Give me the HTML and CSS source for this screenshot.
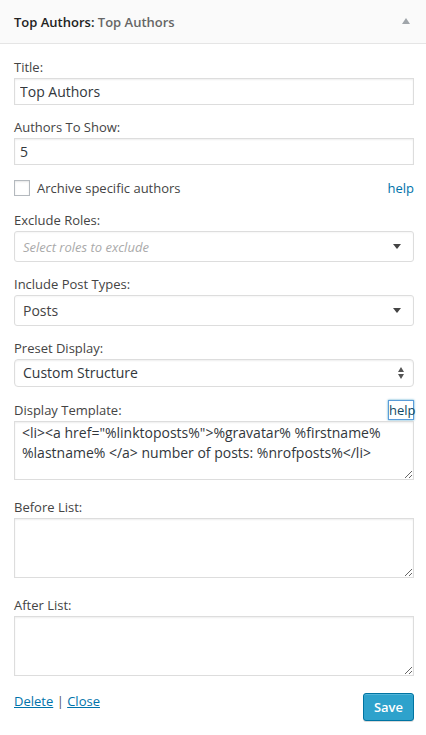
FILE: index.html
```html
<!DOCTYPE html>
<html lang="en">
<head>
<meta charset="utf-8">
<title>Top Authors widget</title>
<link rel="stylesheet" href="styles.css">
</head>
<body>
<div class="widget">
  <div class="widget-top">
    <h4 class="widget-title">Top Authors:<span class="in-title"> Top Authors</span></h4>
    <span class="toggle"><svg width="8" height="6" viewBox="0 0 8 6"><path d="M0 6 L4 0 L8 6 Z" fill="#a0a5aa"/></svg></span>
  </div>
  <div class="widget-inside">
    <div class="field f-title">
      <label class="lbl">Title:</label>
      <input class="text" type="text" value="Top Authors">
    </div>
    <div class="field f-count">
      <label class="lbl">Authors To Show:</label>
      <input class="text" type="text" value="5">
    </div>
    <div class="check-row">
      <label class="check-label"><span class="checkbox"></span>Archive specific authors</label>
      <a class="help-link" href="#">help</a>
    </div>
    <div class="field f-roles">
      <label class="lbl">Exclude Roles:</label>
      <div class="select2"><span class="placeholder">Select roles to exclude</span><span class="s2-arrow"></span></div>
    </div>
    <div class="field f-types">
      <label class="lbl">Include Post Types:</label>
      <div class="select2"><span class="s2-value">Posts</span><span class="s2-arrow"></span></div>
    </div>
    <div class="field f-preset">
      <label class="lbl">Preset Display:</label>
      <div class="native-select"><span class="ns-value">Custom Structure</span>
        <svg class="ns-arrows" width="6" height="12" viewBox="0 0 6 12"><path d="M0 5 L3 0 L6 5 Z M0 7 L6 7 L3 12 Z" fill="#555"/></svg>
      </div>
    </div>
    <div class="field f-template">
      <div class="lbl-row">
        <label class="lbl">Display Template:</label>
        <button class="help-btn" type="button">help</button>
      </div>
      <textarea class="area a-template">&lt;li&gt;&lt;a href="%linktoposts%"&gt;%gravatar% %firstname% %lastname% &lt;/a&gt; number of posts: %nrofposts%&lt;/li&gt;</textarea>
    </div>
    <div class="field f-before">
      <label class="lbl">Before List:</label>
      <textarea class="area a-list"></textarea>
    </div>
    <div class="field f-after">
      <label class="lbl">After List:</label>
      <textarea class="area a-list"></textarea>
    </div>
    <div class="widget-control">
      <div class="links"><a href="#">Delete</a><span class="sep"> | </span><a href="#">Close</a></div>
      <button class="save" type="button">Save</button>
    </div>
  </div>
</div>
</body>
</html>
```
FILE: styles.css
```css
html, body {
  margin: 0;
  padding: 0;
  background: #fff;
}
body {
  font-family: "Open Sans", "Noto Sans", sans-serif;
  font-size: 13px;
  line-height: 18px;
  color: #444;
}
.widget {
  width: 426px;
}
.widget-top {
  height: 43px;
  background: #fafafa;
  border-bottom: 1px solid #e5e5e5;
  display: flex;
  align-items: center;
  justify-content: space-between;
  padding: 0 14px 0 14px;
}
.widget-title {
  margin: 0;
  font-size: 13px;
  font-weight: 600;
  color: #222;
  line-height: 18px;
}
.in-title {
  color: #666;
  font-weight: 600;
}
.toggle {
  display: flex;
  width: 8px;
  height: 6px;
  margin-right: 2px;
  margin-top: -2px;
}
.widget-inside {
  padding: 14px 12px 20px 14px;
  display: flex;
  flex-direction: column;
}
.field {
  display: flex;
  flex-direction: column;
}
.lbl {
  display: block;
  line-height: 18px;
  margin-bottom: 2px;
  color: #444;
}
.text {
  box-sizing: border-box;
  width: 400px;
  height: 27px;
  margin: 0;
  padding: 3px 5px;
  border: 1px solid #ddd;
  box-shadow: inset 0 1px 2px rgba(0,0,0,.07);
  font-family: "Open Sans", sans-serif;
  font-size: 14px;
  color: #32373c;
  background: #fff;
  outline: none;
  border-radius: 0;
}
.f-title { margin-bottom: 13px; }
.check-row {
  margin-top: 15px;
  margin-bottom: 15px;
  height: 16px;
  display: flex;
  align-items: center;
  justify-content: space-between;
}
.check-label {
  display: flex;
  align-items: center;
  gap: 7px;
  font-size: 13px;
  color: #444;
}
.checkbox {
  box-sizing: border-box;
  width: 16px;
  height: 16px;
  border: 1px solid #b4b9be;
  background: #fff;
  box-shadow: inset 0 1px 2px rgba(0,0,0,.1);
}
.help-link {
  color: #0073aa;
  text-decoration: none;
}
.select2 {
  box-sizing: border-box;
  width: 400px;
  height: 31px;
  border: 1px solid #ddd;
  border-radius: 3px;
  background: #fff;
  box-shadow: inset 0 1px 2px rgba(0,0,0,.04);
  display: flex;
  align-items: center;
  justify-content: space-between;
  padding: 0 12px 0 8px;
  font-size: 14px;
  color: #444;
}
.placeholder {
  color: #aaa;
  font-style: italic;
  font-size: 13px;
}
.s2-arrow {
  width: 0;
  height: 0;
  border-left: 4px solid transparent;
  border-right: 4px solid transparent;
  border-top: 5px solid #444;
}
.f-roles, .f-types { margin-bottom: 13px; }
.native-select {
  box-sizing: border-box;
  width: 400px;
  height: 28px;
  border: 1px solid #ddd;
  border-radius: 4px;
  background: #fff;
  box-shadow: inset 0 1px 2px rgba(0,0,0,.07);
  display: flex;
  align-items: center;
  justify-content: space-between;
  padding: 0 9px 0 8px;
  font-size: 14px;
  color: #32373c;
}
.f-preset { margin-bottom: 14px; }
.lbl-row {
  display: flex;
  align-items: center;
  justify-content: space-between;
  height: 18px;
  margin-bottom: 2px;
}
.lbl-row .lbl { margin-bottom: 0; }
.help-btn {
  box-sizing: border-box;
  width: 26px;
  height: 20px;
  padding: 0;
  margin: 0;
  border: 1px solid #5b9dd9;
  box-shadow: 0 0 2px rgba(30,140,190,.8);
  background: #fff;
  font-family: "Open Sans", sans-serif;
  font-size: 13px;
  line-height: 18px;
  color: #124964;
  border-radius: 0;
  text-align: center;
}
.area {
  box-sizing: border-box;
  display: block;
  width: 400px;
  margin: 0;
  padding: 1px 7px;
  border: 1px solid #ddd;
  box-shadow: inset 0 1px 2px rgba(0,0,0,.07);
  font-family: "Open Sans", sans-serif;
  font-size: 14px;
  line-height: 20px;
  color: #32373c;
  background: #fff;
  outline: none;
  border-radius: 0;
}
.a-template { height: 59px; }
.a-list { height: 60px; }
.f-template { margin-bottom: 18px; }
.f-before { margin-bottom: 18px; }
.widget-control {
  margin-top: 17px;
  display: flex;
  justify-content: space-between;
  align-items: flex-start;
}
.links {
  line-height: 18px;
  margin-top: -1px;
}
.links a {
  color: #0073aa;
  text-decoration: underline;
}
.sep { color: #555; }
.save {
  box-sizing: border-box;
  height: 28px;
  padding: 0 10px;
  margin: 0;
  border: 1px solid #0074a2;
  border-radius: 3px;
  background: #2ea2cc;
  box-shadow: inset 0 1px 0 rgba(120,200,230,.5), 0 1px 0 rgba(0,0,0,.15);
  color: #fff;
  font-family: "Open Sans", sans-serif;
  font-size: 13px;
  font-weight: 600;
  line-height: 26px;
}
```
